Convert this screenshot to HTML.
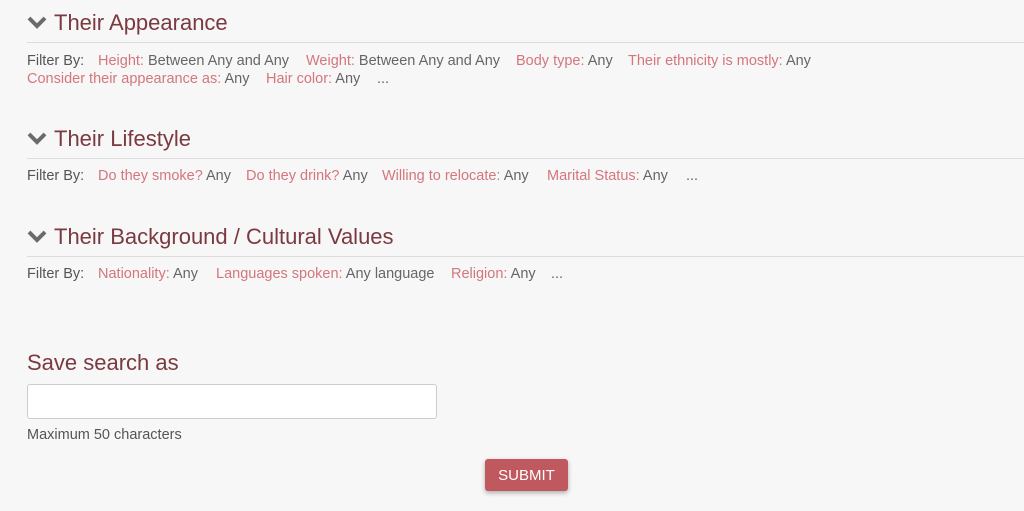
<!DOCTYPE html>
<html><head><style>
body{margin:0;width:1024px;height:511px;background:#f7f7f7;font-family:"Liberation Sans",sans-serif;overflow:hidden;position:relative}
.h{position:absolute;left:54px;font-size:22px;color:#7a3a40;line-height:26px}
.chev{position:absolute;left:27px;width:20px;height:14px}
.ln{position:absolute;left:27px;right:0;height:1px;background:#dcdcdc}
.r{position:absolute;font-size:14.5px;line-height:18px;white-space:nowrap;color:#666}
.l{color:#d4767d}
.fb{color:#555}
</style></head><body>
<svg class="chev" style="top:15px" viewBox="0 0 20 14"><path d="M2 3 L10 11 L18 3" stroke="#6b6b6b" stroke-width="4" fill="none"/></svg>
<div class="h" style="top:10px">Their Appearance</div>
<div class="ln" style="top:42px"></div>
<div class="r fb" style="left:27px;top:52px">Filter By:</div>
<div class="r" style="left:98px;top:52px"><span class="l">Height:</span> Between Any and Any</div>
<div class="r" style="left:306px;top:52px"><span class="l">Weight:</span> Between Any and Any</div>
<div class="r" style="left:516px;top:52px"><span class="l">Body type:</span> Any</div>
<div class="r" style="left:628px;top:52px"><span class="l">Their ethnicity is mostly:</span> Any</div>
<div class="r" style="left:27px;top:70px"><span class="l">Consider their appearance as:</span> Any</div>
<div class="r" style="left:266px;top:70px"><span class="l">Hair color:</span> Any</div>
<div class="r" style="left:377px;top:70px">...</div>

<svg class="chev" style="top:131px" viewBox="0 0 20 14"><path d="M2 3 L10 11 L18 3" stroke="#6b6b6b" stroke-width="4" fill="none"/></svg>
<div class="h" style="top:126px">Their Lifestyle</div>
<div class="ln" style="top:158px"></div>
<div class="r fb" style="left:27px;top:167px">Filter By:</div>
<div class="r" style="left:98px;top:167px"><span class="l">Do they smoke?</span> Any</div>
<div class="r" style="left:246px;top:167px"><span class="l">Do they drink?</span> Any</div>
<div class="r" style="left:382px;top:167px"><span class="l">Willing to relocate:</span> Any</div>
<div class="r" style="left:547px;top:167px"><span class="l">Marital Status:</span> Any</div>
<div class="r" style="left:686px;top:167px">...</div>

<svg class="chev" style="top:229px" viewBox="0 0 20 14"><path d="M2 3 L10 11 L18 3" stroke="#6b6b6b" stroke-width="4" fill="none"/></svg>
<div class="h" style="top:224px">Their Background / Cultural Values</div>
<div class="ln" style="top:256px"></div>
<div class="r fb" style="left:27px;top:265px">Filter By:</div>
<div class="r" style="left:98px;top:265px"><span class="l">Nationality:</span> Any</div>
<div class="r" style="left:216px;top:265px"><span class="l">Languages spoken:</span> Any language</div>
<div class="r" style="left:451px;top:265px"><span class="l">Religion:</span> Any</div>
<div class="r" style="left:551px;top:265px">...</div>

<div class="h" style="left:27px;top:350px">Save search as</div>
<div style="position:absolute;left:27px;top:384px;width:408px;height:33px;background:#fff;border:1px solid #ccc;border-radius:3px"></div>
<div class="r" style="left:27px;top:426px;color:#555">Maximum 50 characters</div>
<div style="position:absolute;left:485px;top:459px;width:83px;height:32px;background:#c0585f;border-radius:3px;box-shadow:0 2px 5px rgba(0,0,0,.3);color:#fff;font-size:15px;line-height:33px;text-align:center">SUBMIT</div>
</body></html>
